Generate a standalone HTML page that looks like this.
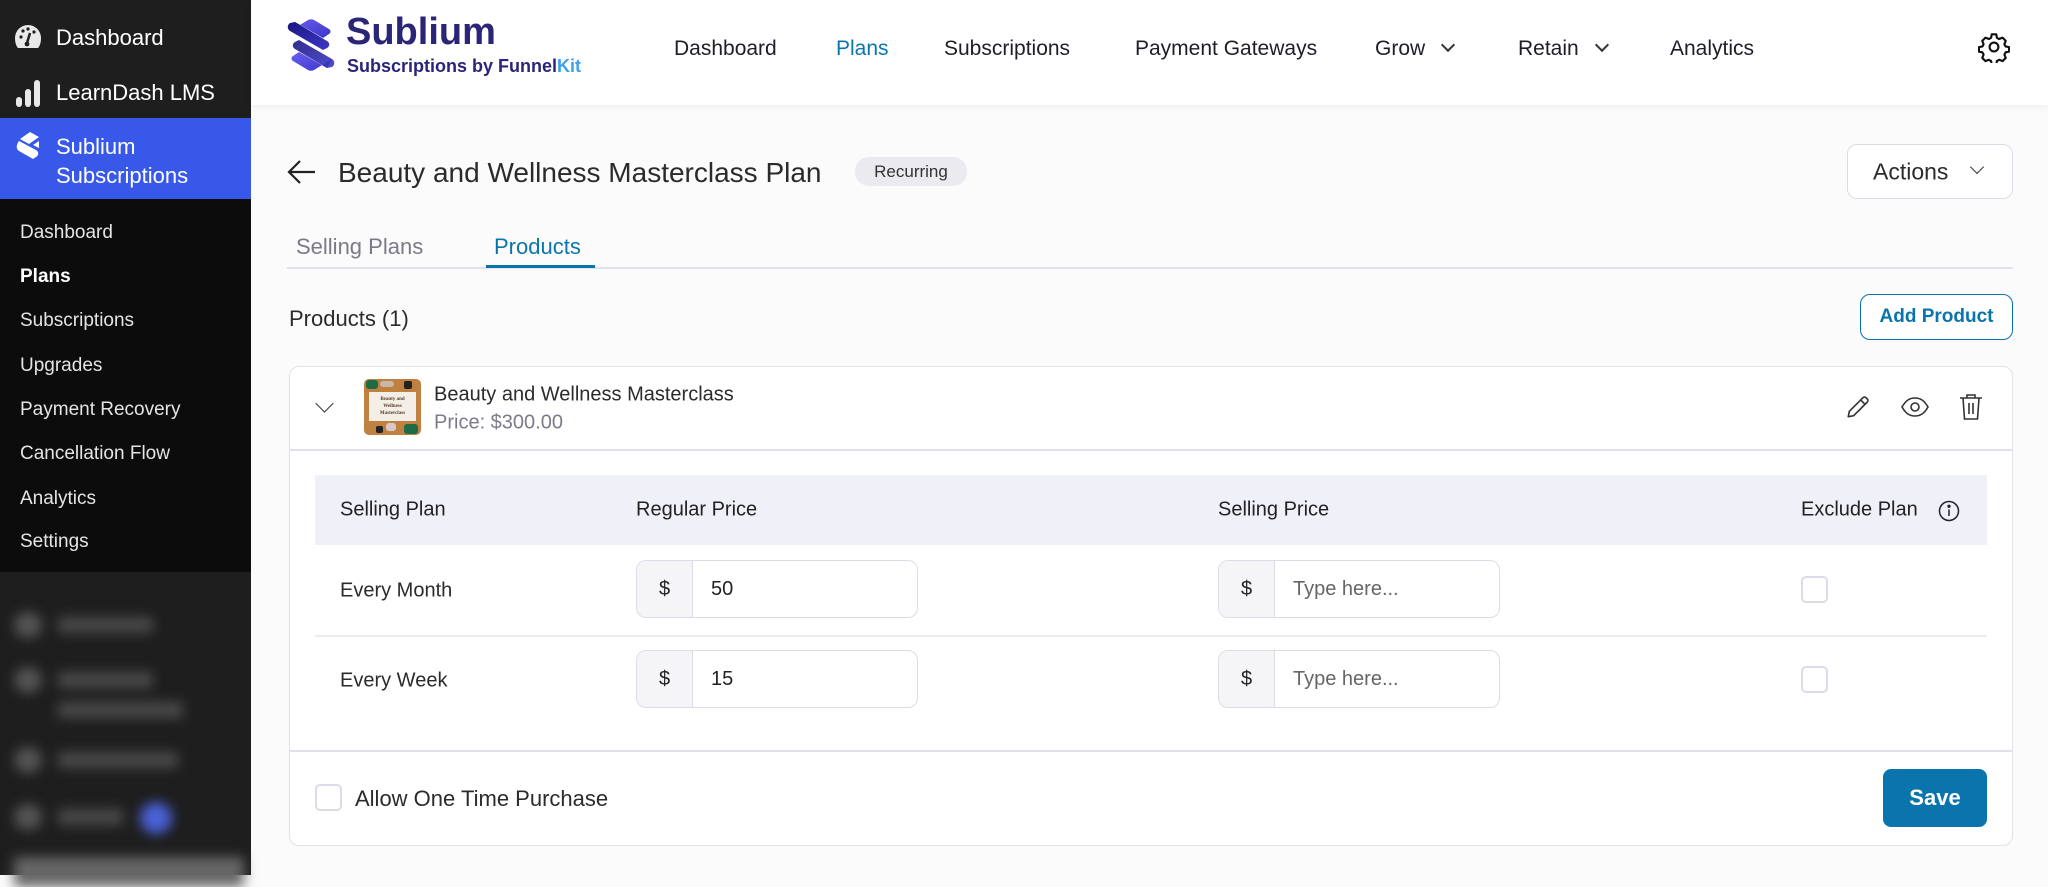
<!DOCTYPE html>
<html><head><meta charset="utf-8"><style>
*{margin:0;padding:0;box-sizing:border-box}
body{width:2048px;height:875px;overflow:hidden;background:#fbfbfc;font-family:"Liberation Sans",sans-serif;color:#2c2c30;position:relative}
.a{position:absolute;white-space:nowrap}
.mid{transform:translateY(-50%)}
#sb{position:absolute;left:0;top:0;width:251px;height:875px;background:#1e1e1e}
.sbt{color:#fff;font-size:22px}
.sub{color:#e4e4e4;font-size:19px;left:20px}
#hdr{position:absolute;left:251px;top:0;right:0;height:105px;background:#fff;box-shadow:0 2px 8px rgba(0,0,0,.06)}
.nav{font-size:21px;color:#1e1e2a;top:49px;font-weight:500}
.th{font-size:20px;color:#222;top:510px}
.inp{position:absolute;height:58px;border:1.5px solid #dcdce8;border-radius:10px;background:#fff;overflow:hidden}
.inp .p{position:absolute;left:0;top:0;bottom:0;width:56px;background:#f5f5f7;border-right:1.5px solid #dcdce8;text-align:center;line-height:57px;font-size:20px;color:#222}
.inp .v{position:absolute;left:74px;top:0;line-height:57px;font-size:20px;color:#222}
.cb{position:absolute;width:27px;height:27px;border:2px solid #dcdce8;border-radius:5px;background:#fff}
</style></head><body>
<div id="sb">
  <svg class="a" style="left:14px;top:24px" width="28" height="26" viewBox="0 0 28 26"><path d="M14 1A13 13 0 0 0 1 14c0 4 1 8 3 10h20c2-2 3-6 3-10A13 13 0 0 0 14 1z" fill="#e8e8e8"/><circle cx="7" cy="13" r="1.6" fill="#1e1e1e"/><circle cx="9" cy="7" r="1.6" fill="#1e1e1e"/><circle cx="14" cy="5" r="1.6" fill="#1e1e1e"/><circle cx="20" cy="8" r="1.6" fill="#1e1e1e"/><path d="M16 9l-3 10" stroke="#1e1e1e" stroke-width="2.5"/><circle cx="13" cy="20" r="2.4" fill="#1e1e1e"/></svg>
  <div class="a sbt mid" style="left:56px;top:38px">Dashboard</div>
  <svg class="a" style="left:15px;top:78px" width="26" height="30" viewBox="0 0 26 30"><rect x="1" y="19" width="6" height="10" rx="3" fill="#e8e8e8"/><rect x="10" y="11" width="6" height="18" rx="3" fill="#e8e8e8"/><rect x="19" y="2" width="6" height="27" rx="3" fill="#e8e8e8"/></svg>
  <div class="a sbt mid" style="left:56px;top:93px">LearnDash LMS</div>
  <div class="a" style="left:0;top:118px;width:251px;height:81px;background:#3858e9"></div>
  <svg class="a" style="left:16px;top:130px" width="26" height="32" viewBox="0 0 26 32"><path d="M4 9l10-7 9 5-10 7z" fill="#fff"/><path d="M3 11l17 9c3 2 3 5 0 7l-3 2L3 21c-3-2-3-6 0-10z" fill="#fff"/><path d="M23 11l-6 4 6 3z" fill="#fff"/></svg>
  <div class="a sbt" style="left:56px;top:132px;line-height:29px">Sublium<br>Subscriptions</div>
  <div class="a" style="left:0;top:199px;width:251px;height:373px;background:#0c0c0c"></div>
  <div class="a sub mid" style="top:233px">Dashboard</div>
  <div class="a sub mid" style="top:277px;color:#fff;font-weight:bold">Plans</div>
  <div class="a sub mid" style="top:321px">Subscriptions</div>
  <div class="a sub mid" style="top:366px">Upgrades</div>
  <div class="a sub mid" style="top:410px">Payment Recovery</div>
  <div class="a sub mid" style="top:454px">Cancellation Flow</div>
  <div class="a sub mid" style="top:499px">Analytics</div>
  <div class="a sub mid" style="top:542px">Settings</div>
  <div class="a" style="left:0;top:572px;width:251px;height:303px;filter:blur(6px)">
    <div class="a" style="left:14px;top:40px;width:28px;height:26px;border-radius:50%;background:#555"></div>
    <div class="a" style="left:58px;top:45px;width:95px;height:16px;background:#4a4a4a"></div>
    <div class="a" style="left:14px;top:95px;width:28px;height:26px;border-radius:50%;background:#555"></div>
    <div class="a" style="left:58px;top:100px;width:95px;height:16px;background:#4a4a4a"></div>
    <div class="a" style="left:58px;top:130px;width:125px;height:16px;background:#4a4a4a"></div>
    <div class="a" style="left:14px;top:175px;width:28px;height:26px;border-radius:50%;background:#555"></div>
    <div class="a" style="left:58px;top:180px;width:120px;height:16px;background:#4a4a4a"></div>
    <div class="a" style="left:14px;top:232px;width:28px;height:26px;border-radius:50%;background:#555"></div>
    <div class="a" style="left:58px;top:237px;width:65px;height:16px;background:#4a4a4a"></div>
    <div class="a" style="left:140px;top:230px;width:32px;height:32px;border-radius:50%;background:#4a62d8"></div>
    <div class="a" style="left:14px;top:285px;width:230px;height:30px;background:#666"></div>
  </div>
</div>
<div id="hdr"></div>
<svg class="a" style="left:287px;top:17px" width="48" height="56" viewBox="0 0 48 56"><defs><linearGradient id="g1" x1="0" y1="0" x2="1" y2="1"><stop offset="0" stop-color="#6a5ff0"/><stop offset="1" stop-color="#3b36c8"/></linearGradient><linearGradient id="g2" x1="0" y1="0" x2="1" y2="1"><stop offset="0" stop-color="#1a1680"/><stop offset="1" stop-color="#3c38c8"/></linearGradient></defs>
<path d="M3 14L21 3c2-1 4-1 6 0l15 9c2 1 2 4 0 5l-6 4L8 5z" fill="url(#g1)"/>
<path d="M8 5l32 19c3 2 3 5 0 7l-4 2L3 14c-3-2-3-6 0-8z" fill="url(#g2)"/>
<path d="M45 42L27 53c-2 1-4 1-6 0L6 44c-2-1-2-4 0-5l6-4 28 16z" fill="url(#g1)"/>
<path d="M40 51L8 32c-3-2-3-5 0-7l4-2 33 19c3 2 3 6 0 8z" fill="url(#g2)" opacity=".9"/></svg>
<div class="a" style="left:346px;top:11px;font-size:38px;font-weight:bold;color:#2a2577">Sublium</div>
<div class="a" style="left:347px;top:56px;font-size:18px;font-weight:bold;color:#2a2577">Subscriptions by Funnel<span style="color:#3aa0f0">Kit</span></div>
<div class="a nav mid" style="left:674px">Dashboard</div>
<div class="a nav mid" style="left:836px;color:#0a75ad">Plans</div>
<div class="a nav mid" style="left:944px">Subscriptions</div>
<div class="a nav mid" style="left:1135px">Payment Gateways</div>
<div class="a nav mid" style="left:1375px">Grow <span style="display:inline-block;width:10px;height:10px;border-right:2px solid #333;border-bottom:2px solid #333;transform:rotate(45deg);margin:0 0 5px 12px"></span></div>
<div class="a nav mid" style="left:1518px">Retain <span style="display:inline-block;width:10px;height:10px;border-right:2px solid #333;border-bottom:2px solid #333;transform:rotate(45deg);margin:0 0 5px 12px"></span></div>
<div class="a nav mid" style="left:1670px">Analytics</div>
<svg class="a" style="left:1978px;top:31px" width="32" height="32" viewBox="0 0 24 24" fill="none" stroke="#111" stroke-width="1.6"><path d="M10.3 2.5h3.4l.5 2.6 1.7.9 2.5-1 2.4 2.4-1 2.5.9 1.7 2.6.5v3.4l-2.6.5-.9 1.7 1 2.5-2.4 2.4-2.5-1-1.7.9-.5 2.6h-3.4l-.5-2.6-1.7-.9-2.5 1-2.4-2.4 1-2.5-.9-1.7-2.6-.5v-3.4l2.6-.5.9-1.7-1-2.5 2.4-2.4 2.5 1 1.7-.9z" stroke-linejoin="round"/><circle cx="12" cy="12" r="3.3"/></svg>

<svg class="a" style="left:287px;top:159px" width="30" height="26" viewBox="0 0 30 26" fill="none" stroke="#222" stroke-width="2.2"><path d="M28 13H3M13 2L2 13l11 11"/></svg>
<div class="a mid" style="left:338px;top:173px;font-size:28px;font-weight:500;color:#2b2b2b">Beauty and Wellness Masterclass Plan</div>
<div class="a" style="left:855px;top:157px;width:112px;height:29px;border-radius:14px;background:#ebebef;font-size:17px;line-height:29px;text-align:center;color:#333">Recurring</div>
<div class="a" style="left:1847px;top:144px;width:166px;height:55px;border:1.5px solid #dcdce8;border-radius:10px;background:#fff"></div>
<div class="a mid" style="left:1873px;top:172px;font-size:23px;color:#2b2b2b">Actions</div>
<div class="a" style="left:1972px;top:162px;width:10px;height:10px;border-right:1.6px solid #333;border-bottom:1.6px solid #333;transform:rotate(45deg)"></div>

<div class="a mid" style="left:296px;top:247px;font-size:22px;color:#7a7a86">Selling Plans</div>
<div class="a mid" style="left:494px;top:247px;font-size:22px;color:#0a75ad">Products</div>
<div class="a" style="left:287px;top:267px;width:1726px;height:2px;background:#e1e1ea"></div>
<div class="a" style="left:486px;top:265px;width:109px;height:3px;background:#0a75ad"></div>

<div class="a mid" style="left:289px;top:319px;font-size:22px;color:#2b2b2b">Products (1)</div>
<div class="a" style="left:1860px;top:294px;width:153px;height:46px;border:1.6px solid #0a75ad;border-radius:10px;background:#fff;color:#0a75ad;font-size:19px;font-weight:bold;line-height:43px;text-align:center">Add Product</div>

<div class="a" style="left:289px;top:366px;width:1724px;height:480px;border:1.5px solid #e1e1ea;border-radius:10px;background:#fff"></div>
<div class="a" style="left:290px;top:449px;width:1722px;height:1.5px;background:#e1e1ea"></div>
<div class="a" style="left:318px;top:397px;width:13px;height:13px;border-right:1.8px solid #333;border-bottom:1.8px solid #333;transform:rotate(45deg)"></div>
<div class="a" style="left:364px;top:379px;width:57px;height:56px;border-radius:5px;background:#c08040;overflow:hidden">
  <div class="a" style="left:2px;top:1px;width:12px;height:9px;background:#1e6b45;border-radius:3px"></div>
  <div class="a" style="left:16px;top:2px;width:14px;height:6px;background:#c9b8a8;border-radius:3px"></div>
  <div class="a" style="left:40px;top:2px;width:8px;height:8px;background:#222;border-radius:2px"></div>
  <div class="a" style="left:40px;top:45px;width:14px;height:10px;background:#1e6b45;border-radius:3px"></div>
  <div class="a" style="left:12px;top:47px;width:7px;height:7px;background:#222;border-radius:2px"></div>
  <div class="a" style="left:22px;top:44px;width:10px;height:8px;background:#d8c8c8;border-radius:3px"></div>
  <div class="a" style="left:5px;top:13px;width:47px;height:29px;background:#f3efe6;font-size:5px;font-weight:bold;color:#5a3a2a;text-align:center;line-height:7px;padding-top:4px;font-family:'Liberation Serif',serif">Beauty and<br>Wellness<br>Masterclass</div>
</div>
<div class="a mid" style="left:434px;top:395px;font-size:20px;color:#2b2b2b">Beauty and Wellness Masterclass</div>
<div class="a mid" style="left:434px;top:423px;font-size:20px;color:#7b7b8a">Price: $300.00</div>
<svg class="a" style="left:1845px;top:394px" width="26" height="26" viewBox="0 0 24 24" fill="none" stroke="#333" stroke-width="1.5" stroke-linejoin="round"><path d="M3 21l1-5L16.5 3.5a2 2 0 0 1 3 0l1 1a2 2 0 0 1 0 3L8 20zM14.5 5.5l4 4"/></svg>
<svg class="a" style="left:1900px;top:396px" width="30" height="22" viewBox="0 0 30 22" fill="none" stroke="#333" stroke-width="1.6"><path d="M2 11C6 4 10 2 15 2s9 2 13 9c-4 7-8 9-13 9S6 18 2 11z"/><circle cx="15" cy="11" r="4"/></svg>
<svg class="a" style="left:1959px;top:393px" width="24" height="28" viewBox="0 0 24 28" fill="none" stroke="#333" stroke-width="1.6"><path d="M1 5h22M8 5V2h8v3M4 5l1.5 21h13L20 5M10 10v11M14 10v11"/></svg>

<div class="a" style="left:315px;top:475px;width:1672px;height:70px;background:#f0f0f8"></div>
<div class="a th mid" style="left:340px">Selling Plan</div>
<div class="a th mid" style="left:636px">Regular Price</div>
<div class="a th mid" style="left:1218px">Selling Price</div>
<div class="a th mid" style="left:1801px">Exclude Plan</div>
<svg class="a" style="left:1938px;top:500px" width="22" height="22" viewBox="0 0 22 22" fill="none" stroke="#222" stroke-width="1.5"><circle cx="11" cy="11" r="9.5"/><path d="M11 9.5v6.5"/><circle cx="11" cy="6.3" r=".9" fill="#222"/></svg>

<div class="a mid" style="left:340px;top:591px;font-size:20px;color:#2b2b2b">Every Month</div>
<div class="inp" style="left:636px;top:560px;width:282px"><div class="p">$</div><div class="v">50</div></div>
<div class="inp" style="left:1218px;top:560px;width:282px"><div class="p">$</div><div class="v" style="color:#666">Type here...</div></div>
<div class="cb" style="left:1801px;top:576px"></div>
<div class="a" style="left:315px;top:635px;width:1672px;height:1.5px;background:#ececf3"></div>
<div class="a mid" style="left:340px;top:681px;font-size:20px;color:#2b2b2b">Every Week</div>
<div class="inp" style="left:636px;top:650px;width:282px"><div class="p">$</div><div class="v">15</div></div>
<div class="inp" style="left:1218px;top:650px;width:282px"><div class="p">$</div><div class="v" style="color:#666">Type here...</div></div>
<div class="cb" style="left:1801px;top:666px"></div>

<div class="a" style="left:290px;top:750px;width:1722px;height:1.5px;background:#e1e1ea"></div>
<div class="cb" style="left:315px;top:784px"></div>
<div class="a mid" style="left:355px;top:799px;font-size:22px;color:#2b2b2b">Allow One Time Purchase</div>
<div class="a" style="left:1883px;top:769px;width:104px;height:58px;border-radius:8px;background:#0a75ad;color:#fff;font-size:22px;font-weight:bold;line-height:58px;text-align:center">Save</div>
</body></html>
